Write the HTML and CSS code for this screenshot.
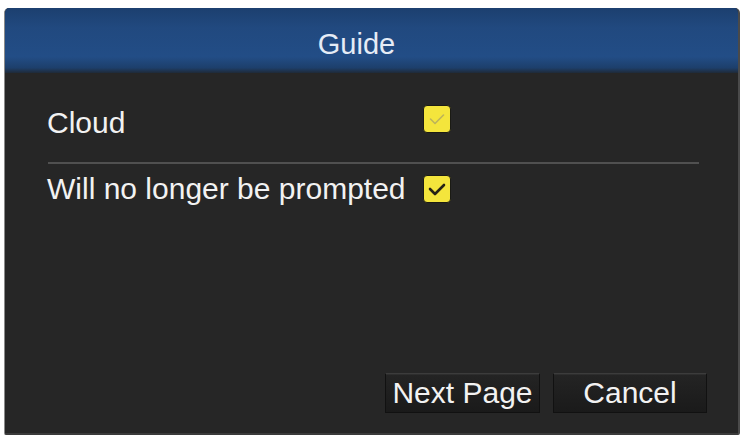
FILE: index.html
```html
<!DOCTYPE html>
<html>
<head>
<meta charset="utf-8">
<link rel="stylesheet" href="styles.css">
</head>
<body>
<div class="dialog">
  <div class="header">Guide</div>
  <div class="content">
    <div class="row">
      <span class="label">Cloud</span>
      <span class="check check-up">
        <svg width="28" height="28" viewBox="0 0 28 28"><polyline points="7.5,14 12,18.5 20.5,10" fill="none" stroke="#bdb45a" stroke-width="1.6" stroke-linecap="round" stroke-linejoin="round"/></svg>
      </span>
    </div>
    <div class="divider"></div>
    <div class="row row2">
      <span class="label">Will no longer be prompted</span>
      <span class="check">
        <svg width="28" height="28" viewBox="0 0 28 28"><polyline points="7,14 12,19 21,10" fill="none" stroke="#262215" stroke-width="2.6" stroke-linecap="round" stroke-linejoin="round"/></svg>
      </span>
    </div>
  </div>
  <div class="buttons">
    <div class="btn btn-next">Next Page</div>
    <div class="btn btn-cancel">Cancel</div>
  </div>
</div>
</body>
</html>
```
FILE: styles.css
```css
html, body {
  margin: 0;
  padding: 0;
  background: #ffffff;
  width: 748px;
  height: 440px;
  overflow: hidden;
}

.dialog {
  margin: 8px 0 0 4px;
  width: 736px;
  height: 427px;
  box-sizing: border-box;
  background: #262626;
  border-left: 1px solid #8a8a8a;
  border-right: 2px solid #4a4a4a;
  border-bottom: 2px solid #3a3a3a;
  border-radius: 5px 5px 2px 2px;
  display: flex;
  flex-direction: column;
  font-family: "Liberation Sans", Arial, sans-serif;
  color: #f2f2f2;
  overflow: hidden;
}

.header {
  height: 65px;
  flex: none;
  background: linear-gradient(#1c3f6f 0%, #21497f 30%, #224d86 75%, #1d3f6b 92%, #1f2a38 100%);
  color: #e6ecf6;
  font-size: 29px;
  text-align: center;
  line-height: 72px;
  padding-right: 30px;
}

.content {
  flex: 1;
  padding: 30px 39px 0 42px;
}

.row {
  display: flex;
  align-items: center;
  height: 40px;
}

.label {
  font-size: 30px;
  line-height: 34px;
  width: 376px;
  flex: none;
  white-space: nowrap;
}

.check {
  width: 28px;
  height: 28px;
  box-sizing: border-box;
  background: #f4e53c;
  border: 1.5px solid #1b1b14;
  border-radius: 4px;
  display: flex;
  align-items: center;
  justify-content: center;
  flex: none;
}

.check svg {
  display: block;
  flex: none;
}

.check-up {
  margin-bottom: 9px;
}

.divider {
  margin-top: 19px;
  margin-left: 1px;
  height: 2px;
  background: #505050;
}

.row2 {
  margin-top: 5px;
}

.buttons {
  display: flex;
  justify-content: flex-end;
  gap: 13px;
  padding: 0 31px 20px 0;
}

.btn {
  height: 40px;
  box-sizing: border-box;
  background: linear-gradient(#242424, #1a1a1a);
  border: 1px solid #111111;
  border-top-color: #3c3c3c;
  box-shadow: inset 0 1px 0 #2e2e2e;
  font-size: 30px;
  line-height: 38px;
  text-align: center;
  color: #f2f2f2;
}

.btn-next {
  width: 155px;
}

.btn-cancel {
  width: 154px;
}
```
